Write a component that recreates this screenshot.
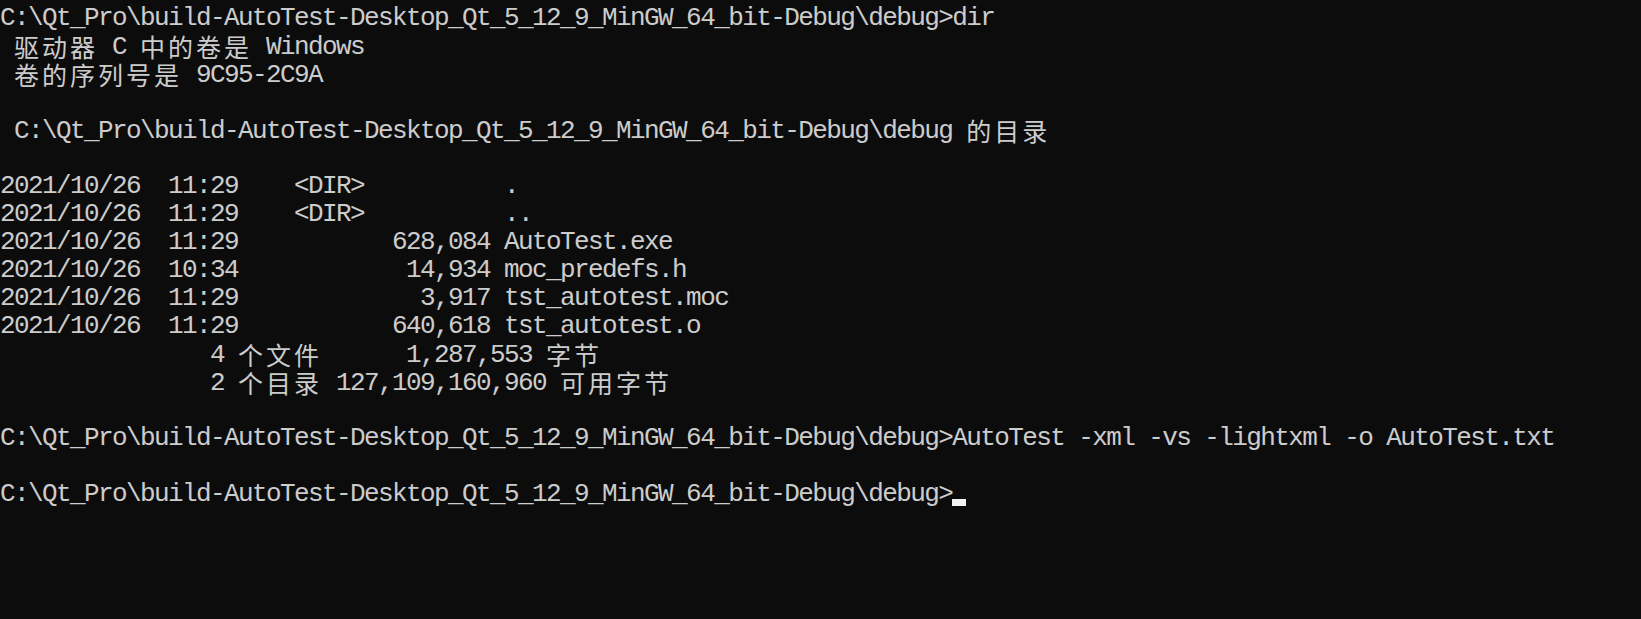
const PROMPT = "C:\\Qt_Pro\\build-AutoTest-Desktop_Qt_5_12_9_MinGW_64_bit-Debug\\debug>";

const lines: string[] = [
  PROMPT + "dir",
  " 驱动器 C 中的卷是 Windows",
  " 卷的序列号是 9C95-2C9A",
  "",
  " C:\\Qt_Pro\\build-AutoTest-Desktop_Qt_5_12_9_MinGW_64_bit-Debug\\debug 的目录",
  "",
  "2021/10/26  11:29    <DIR>          .",
  "2021/10/26  11:29    <DIR>          ..",
  "2021/10/26  11:29           628,084 AutoTest.exe",
  "2021/10/26  10:34            14,934 moc_predefs.h",
  "2021/10/26  11:29             3,917 tst_autotest.moc",
  "2021/10/26  11:29           640,618 tst_autotest.o",
  "               4 个文件      1,287,553 字节",
  "               2 个目录 127,109,160,960 可用字节",
  "",
  PROMPT + "AutoTest -xml -vs -lightxml -o AutoTest.txt",
  "",
];

// split a line into runs of half-width and full-width characters
function runs(text: string) {
  const out: { wide: boolean; text: string }[] = [];
  for (const ch of text) {
    const wide = ch.charCodeAt(0) > 0x2e80;
    const last = out[out.length - 1];
    if (last && last.wide === wide) last.text += ch;
    else out.push({ wide, text: ch });
  }
  return out;
}

function Line({ text, children }: { text: string; children?: React.ReactNode }) {
  return (
    <div className="h-[28px] leading-[28px] whitespace-pre">
      {runs(text).map((r, i) =>
        r.wide ? (
          <span
            key={i}
            className="font-['Noto_Sans_CJK_SC',sans-serif] text-[25px] tracking-[3px] align-[-3px]"
          >
            {r.text}
          </span>
        ) : (
          <span key={i}>{r.text}</span>
        )
      )}
      {children}
    </div>
  );
}

export default function App() {
  return (
    <div className="w-[1641px] h-[619px] overflow-hidden bg-[#0c0c0c] text-[#cccccc] pt-[4px] font-['Liberation_Mono',monospace] text-[26px] tracking-[-1.6px]">
      {lines.map((l, i) => (
        <Line key={i} text={l} />
      ))}
      <Line text={PROMPT}>
        <span className="inline-block w-[14px] h-[7px] bg-[#f2f2f2] align-[-5px]" />
      </Line>
    </div>
  );
}
